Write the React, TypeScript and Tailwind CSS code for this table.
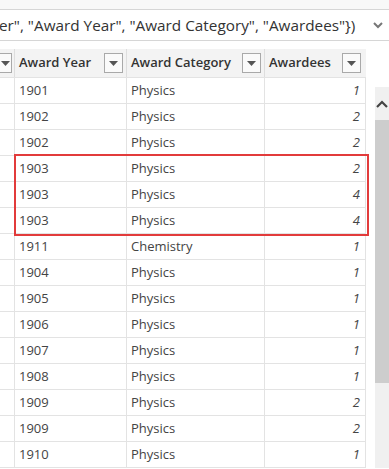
import React from 'react';

const rows: [string, string, number][] = [
  ['1901', 'Physics', 1],
  ['1902', 'Physics', 2],
  ['1902', 'Physics', 2],
  ['1903', 'Physics', 2],
  ['1903', 'Physics', 4],
  ['1903', 'Physics', 4],
  ['1911', 'Chemistry', 1],
  ['1904', 'Physics', 1],
  ['1905', 'Physics', 1],
  ['1906', 'Physics', 1],
  ['1907', 'Physics', 1],
  ['1908', 'Physics', 1],
  ['1909', 'Physics', 2],
  ['1909', 'Physics', 2],
  ['1910', 'Physics', 1],
];

const formula = 'er", "Award Year", "Award Category", "Awardees"})';

function FilterButton() {
  return (
    <div className="flex h-[20px] w-[19px] items-center justify-center border border-[#a9a9a9] bg-[#fafafa]">
      <svg width="9" height="5" viewBox="0 0 9 5">
        <path d="M0 0h9L4.5 5z" fill="#555" />
      </svg>
    </div>
  );
}

const cols = 'grid grid-cols-[15px_112px_138px_101px]';

export default function App() {
  return (
    <div className="relative h-[469px] w-[389px] overflow-hidden bg-white font-['Open_Sans',sans-serif] text-[#444]">
      <div className="h-[10px] border-b border-[#d6d6d6] bg-[#f8f8f8]" />
      <div className="flex h-[31px] items-center justify-between border-b border-[#d6d6d6] pr-[6px]">
        <span className="ml-[-1px] whitespace-nowrap text-[15.3px] text-[#333]">{formula}</span>
        <svg width="10" height="7" viewBox="0 0 10 7">
          <path d="M1 1l4 4 4-4" fill="none" stroke="#777" strokeWidth="2" />
        </svg>
      </div>
      <div className="mt-[8px] flex">
        <div className="w-[366px]">
          <div className={`${cols} h-[28px] bg-[#f3f3f3] text-[13px] font-semibold text-[#333]`}>
            <div className="flex items-center justify-end border-r border-[#dedede]">
              <div className="mr-[2px] flex h-[20px] w-[12px] items-center justify-center overflow-hidden border border-l-0 border-[#a9a9a9] bg-[#fafafa]">
                <svg width="9" height="5" viewBox="0 0 9 5">
                  <path d="M0 0h9L4.5 5z" fill="#555" />
                </svg>
              </div>
            </div>
            <div className="flex items-center justify-between border-r border-[#dedede] pl-[4px] pr-[3px]">
              <span>Award Year</span>
              <FilterButton />
            </div>
            <div className="flex items-center justify-between border-r border-[#dedede] pl-[4px] pr-[3px]">
              <span>Award Category</span>
              <FilterButton />
            </div>
            <div className="flex items-center justify-between pl-[4px] pr-[5px]">
              <span>Awardees</span>
              <FilterButton />
            </div>
          </div>
          {rows.map(([year, cat, n], i) => (
            <div key={i} className={`${cols} h-[26px] border-t border-[#e3e3e3] text-[13px]`}>
              <div className="border-r border-[#e3e3e3]" />
              <div className="flex items-center border-r border-[#e3e3e3] pl-[4px]">{year}</div>
              <div className="flex items-center border-r border-[#e3e3e3] pl-[4px]">{cat}</div>
              <div className="flex items-center justify-end border-r border-[#e3e3e3] pr-[5px] italic">{n}</div>
            </div>
          ))}
          <div className="border-t border-[#e3e3e3]" />
        </div>
        <div className="ml-[9px] mt-[38px] flex-1 bg-[#f0f0f0]">
          <div className="flex h-[33px] items-center justify-center">
            <svg width="12" height="8" viewBox="0 0 12 8">
              <path d="M1 7l5-5 5 5" fill="none" stroke="#444" strokeWidth="2.2" />
            </svg>
          </div>
          <div className="h-[263px] bg-[#cdcdcd]" />
        </div>
      </div>
      <div className="pointer-events-none absolute left-[14px] top-[154px] h-[82px] w-[355px] border-2 border-[#e23b3b]" />
    </div>
  );
}
